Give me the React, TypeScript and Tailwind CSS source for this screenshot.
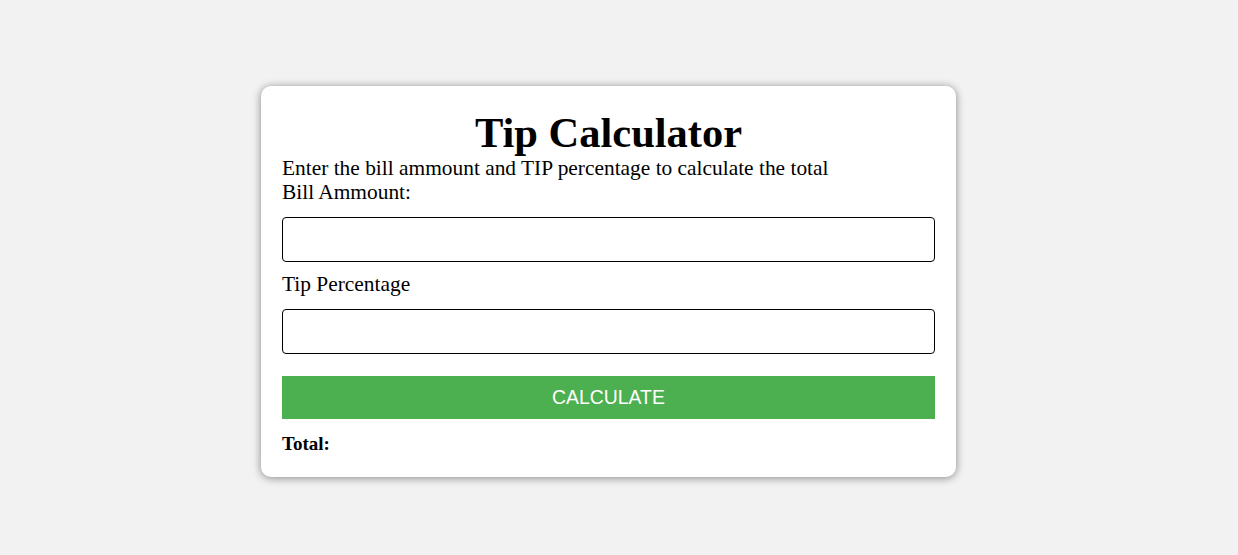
import { useState } from "react";

export default function App() {
  const [bill, setBill] = useState("");
  const [tip, setTip] = useState("");
  const [total, setTotal] = useState<string | null>(null);

  const calculate = () => {
    const b = parseFloat(bill);
    const t = parseFloat(tip);
    if (isNaN(b) || isNaN(t)) return;
    setTotal((b * (1 + t / 100)).toFixed(2));
  };

  return (
    <div className="flex min-h-screen bg-[#f2f2f2] pl-[261px] pt-[86px] font-['Liberation_Serif',serif] text-black">
      <div className="h-fit w-[695px] rounded-[10px] bg-white px-[21px] pb-[23px] pt-[24px] shadow-[0_1px_8px_rgba(0,0,0,0.45)]">
        <h1 className="text-center text-[42.5px] font-bold leading-[46px]">
          Tip Calculator
        </h1>
        <p className="text-[21.4px] leading-[24px]">
          Enter the bill ammount and TIP percentage to calculate the total
        </p>
        <label htmlFor="bill" className="block text-[21.4px] leading-[24px]">
          Bill Ammount:
        </label>
        <input
          id="bill"
          type="number"
          value={bill}
          onChange={(e) => setBill(e.target.value)}
          className="mt-[13px] block h-[45px] w-full rounded-[4px] border border-black px-2 text-[18px] outline-none"
        />
        <label
          htmlFor="tip"
          className="mt-[10px] block text-[21.4px] leading-[24px]"
        >
          Tip Percentage
        </label>
        <input
          id="tip"
          type="number"
          value={tip}
          onChange={(e) => setTip(e.target.value)}
          className="mt-[13px] block h-[45px] w-full rounded-[4px] border border-black px-2 text-[18px] outline-none"
        />
        <button
          onClick={calculate}
          className="mt-[22px] block h-[43px] w-full bg-[#4caf50] font-['Liberation_Sans',Arial,sans-serif] text-[19.4px] text-white"
        >
          CALCULATE
        </button>
        <p className="mt-[14px] text-[19px] font-bold leading-[21px]">
          Total: {total ?? ""}
        </p>
      </div>
    </div>
  );
}
